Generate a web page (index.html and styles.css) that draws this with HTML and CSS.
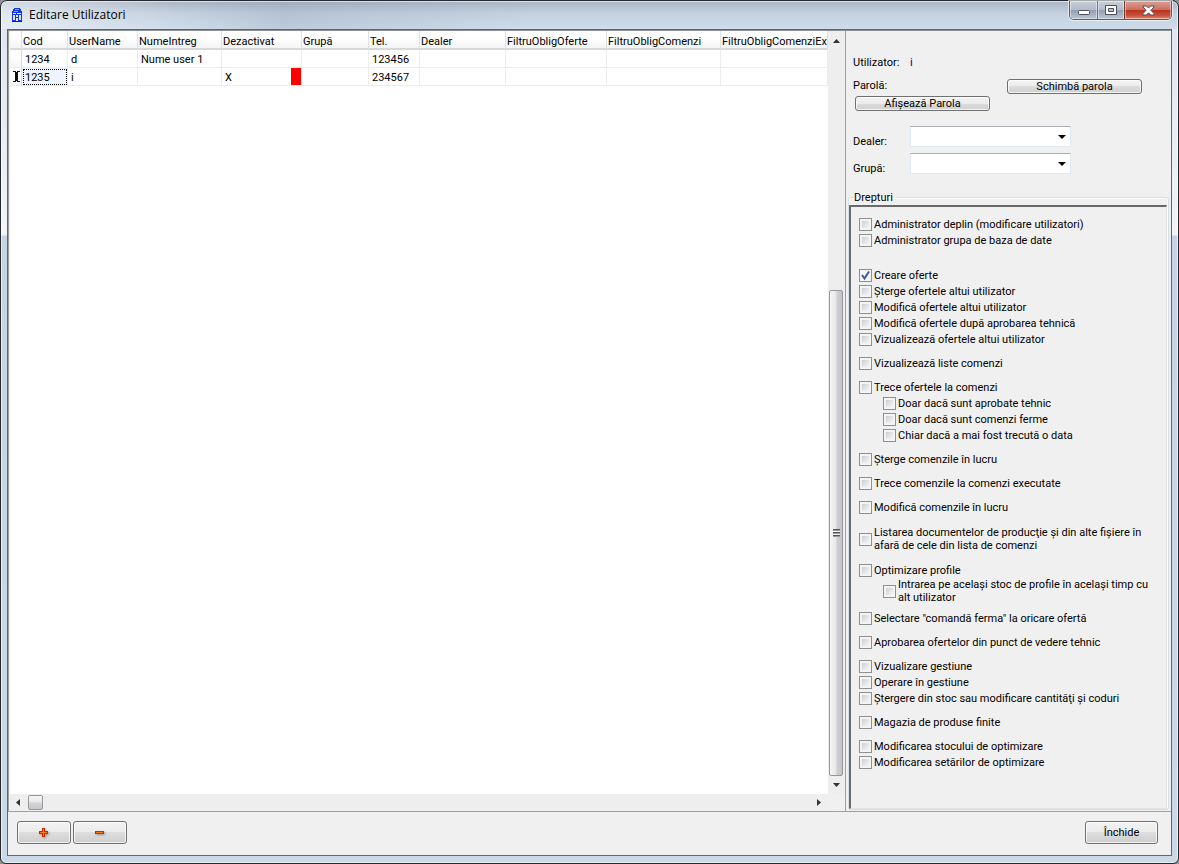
FILE: index.html
```html
<!DOCTYPE html>
<html lang="ro">
<head>
<meta charset="utf-8">
<title>Editare Utilizatori</title>
<link rel="stylesheet" href="styles.css">
</head>
<body>
<div class="window">
  <header class="titlebar">
    <svg class="app-icon" width="12" height="16" viewBox="0 0 12 16" aria-hidden="true">
      <path d="M3 1h6v1h1v2h1v11H1V4h1V2h1z" fill="#1436e8"/>
      <path d="M4 2h4v1H4zM3 4h4v1H3z" fill="#7fa2ff"/>
      <path d="M2 6h3v1H2zM6 6h4v1H6zM2 8h2v5H2zM5 8h2v2H5zM8 8h2v5H8zM5 11h2v3H5z" fill="#dfe8ff"/>
      <path d="M1 14h10v1H1z" fill="#0d1fa0"/>
    </svg>
    <h1 class="title">Editare Utilizatori</h1>
    <div class="caption-buttons">
      <button class="caption" type="button" aria-label="Minimizare">
        <svg width="13" height="11" viewBox="0 0 13 11"><rect x="1.500" y="5.500" width="11" height="4" rx="1" fill="#fff" stroke="#4a5060"/></svg>
      </button>
      <button class="caption caption-max" type="button" aria-label="Maximizare">
        <svg width="12" height="11" viewBox="0 0 12 11"><path d="M.5.5h11v9H.5z" fill="#fff" stroke="#4a5060"/><path d="M3.500 3.500h5v3h-5z" fill="#b9bfcc" stroke="#4a5060"/></svg>
      </button>
      <button class="caption caption-close" type="button" aria-label="Închidere fereastră">
        <svg width="13" height="11" viewBox="0 0 13 11"><path d="M1 1h3.500l2 2 2-2H12v1L9 5.200 12 8.500V10H8.500l-2-2.200-2 2.200H1V8.500l3-3.300L1 2z" fill="#fff" stroke="#5a4650"/></svg>
      </button>
    </div>
  </header>

  <main class="client">
    <div class="panes">
      <section class="grid-pane">
        <div class="sheet">
          <table class="users">
            <colgroup>
              <col class="c-mark"><col class="c-cod"><col class="c-user"><col class="c-nume"><col class="c-dez"><col class="c-grupa"><col class="c-tel"><col class="c-dealer"><col class="c-foferte"><col class="c-fcom"><col class="c-fcomex">
            </colgroup>
            <thead>
              <tr><th></th><th>Cod</th><th>UserName</th><th>NumeIntreg</th><th>Dezactivat</th><th>Grupă</th><th>Tel.</th><th>Dealer</th><th>FiltruObligOferte</th><th>FiltruObligComenzi</th><th>FiltruObligComenziEx</th></tr>
            </thead>
            <tbody>
              <tr><td class="mark"></td><td>1234</td><td>d</td><td>Nume user 1</td><td></td><td></td><td>123456</td><td></td><td></td><td></td><td></td></tr>
              <tr><td class="mark"><svg width="7" height="11" viewBox="0 0 7 11"><path d="M0 0h3v1h1V0h3v1H5v9h2v1H4v-1H3v1H0v-1h2V1H0z" fill="#111"/></svg></td><td class="focused">1235</td><td>i</td><td></td><td class="disabled-flag">X</td><td></td><td>234567</td><td></td><td></td><td></td><td></td></tr>
            </tbody>
          </table>
        </div>
        <div class="scroll scroll-v">
          <svg class="arrow" width="7" height="4" viewBox="0 0 7 4"><path d="M3.500 0 7 4H0z"/></svg>
          <div class="track-v"><div class="thumb-v"><i class="grip"></i></div></div>
          <svg class="arrow" width="7" height="4" viewBox="0 0 7 4"><path d="M0 0h7L3.500 4z"/></svg>
        </div>
        <div class="scroll scroll-h">
          <svg class="arrow" width="4" height="7" viewBox="0 0 4 7"><path d="M4 0v7L0 3.500z"/></svg>
          <div class="track-h"><div class="thumb-h"></div></div>
          <svg class="arrow" width="4" height="7" viewBox="0 0 4 7"><path d="M0 0v7l4-3.500z"/></svg>
        </div>
      </section>

      <aside class="side">
        <div class="account">
          <div class="line"><span class="name">Utilizator:</span><span class="navy">i</span></div>
          <div class="password">
            <div class="password-col"><span>Parolă:</span><button class="btn btn-slim" type="button">Afişează Parola</button></div>
            <button class="btn btn-slim" type="button">Schimbă parola</button>
          </div>
          <div class="pick"><label class="name" for="dealer">Dealer:</label><span class="combo"><select id="dealer"><option></option></select></span></div>
          <div class="pick"><label class="name" for="grupa">Grupă:</label><span class="combo"><select id="grupa"><option></option></select></span></div>
        </div>

        <fieldset class="rights">
          <legend>Drepturi</legend>
          <div class="rights-list">
            <div class="group group-admin">
              <label class="right"><input type="checkbox">Administrator deplin (modificare utilizatori)</label>
              <label class="right"><input type="checkbox">Administrator grupa de baza de date</label>
            </div>
            <div class="group">
              <label class="right"><input type="checkbox" checked>Creare oferte</label>
              <label class="right"><input type="checkbox">Şterge ofertele altui utilizator</label>
              <label class="right"><input type="checkbox">Modifică ofertele altui utilizator</label>
              <label class="right"><input type="checkbox">Modifică ofertele după aprobarea tehnică</label>
              <label class="right"><input type="checkbox">Vizualizează ofertele altui utilizator</label>
            </div>
            <div class="group"><label class="right"><input type="checkbox">Vizualizează liste comenzi</label></div>
            <div class="group">
              <label class="right"><input type="checkbox">Trece ofertele la comenzi</label>
              <label class="right sub"><input type="checkbox">Doar dacă sunt aprobate tehnic</label>
              <label class="right sub"><input type="checkbox">Doar dacă sunt comenzi ferme</label>
              <label class="right sub"><input type="checkbox">Chiar dacă a mai fost trecută o data</label>
            </div>
            <div class="group"><label class="right"><input type="checkbox">Şterge comenzile în lucru</label></div>
            <div class="group"><label class="right"><input type="checkbox">Trece comenzile la comenzi executate</label></div>
            <div class="group"><label class="right"><input type="checkbox">Modifică comenzile în lucru</label></div>
            <div class="group group-tall"><label class="right"><input type="checkbox"><span>Listarea documentelor de producţie şi din alte fişiere în<br>afară de cele din lista de comenzi</span></label></div>
            <div class="group group-tight">
              <label class="right"><input type="checkbox">Optimizare profile</label>
              <label class="right sub"><input type="checkbox"><span>Intrarea pe acelaşi stoc de profile în acelaşi timp cu<br>alt utilizator</span></label>
            </div>
            <div class="group"><label class="right"><input type="checkbox">Selectare "comandă ferma" la oricare ofertă</label></div>
            <div class="group"><label class="right"><input type="checkbox">Aprobarea ofertelor din punct de vedere tehnic</label></div>
            <div class="group">
              <label class="right"><input type="checkbox">Vizualizare gestiune</label>
              <label class="right"><input type="checkbox">Operare în gestiune</label>
              <label class="right"><input type="checkbox">Ştergere din stoc sau modificare cantităţi şi coduri</label>
            </div>
            <div class="group"><label class="right"><input type="checkbox">Magazia de produse finite</label></div>
            <div class="group">
              <label class="right"><input type="checkbox">Modificarea stocului de optimizare</label>
              <label class="right"><input type="checkbox">Modificarea setărilor de optimizare</label>
            </div>
          </div>
        </fieldset>
      </aside>
    </div>

    <footer class="actions">
      <button class="btn btn-icon" type="button" aria-label="Adaugă">
        <svg width="11" height="11" viewBox="0 0 11 11"><path d="M3 1h3v3h3v3H6v3H3V7H0V4h3z" fill="#cc2a04"/><path d="M4 2h1v3h3v1H5v3H4V6H1V5h3z" fill="#f47a1c"/></svg>
      </button>
      <button class="btn btn-icon" type="button" aria-label="Şterge">
        <svg width="11" height="11" viewBox="0 0 11 11"><path d="M0 4h9v3H0z" fill="#cc2a04"/><path d="M1 5h7v1H1z" fill="#f47a1c"/></svg>
      </button>
      <button class="btn btn-close" type="button">Închide</button>
    </footer>
  </main>
</div>
</body>
</html>
```
FILE: styles.css
```css
* { box-sizing: border-box; }

body {
  margin: 0;
  background: #8d9096;
  color: #000;
  font: 11px/13px Roboto, Tahoma, sans-serif;
}

button, select, input { font: inherit; color: inherit; margin: 0; }

/* Window frame */
.window {
  display: flex;
  flex-direction: column;
  min-height: 100vh;
  padding: 0 6px 7px;
  border: 1px solid #26282e;
  border-radius: 7px 7px 6px 6px;
  background:
    linear-gradient(90deg, rgba(255,255,255,.5), rgba(255,255,255,0) 15%, rgba(120,135,160,.2) 24%, rgba(255,255,255,0) 45%) 0 0 / 100% 28px no-repeat,
    linear-gradient(#a9b4c4, #c3d0df 12px, #cfdce9 28px) 0 0 / 100% 28px no-repeat,
    linear-gradient(#dce4ee, #f2f4f8 234px, #c5d3e4 235px, #cbd9e7);
  box-shadow: inset 0 0 0 1px rgba(255,255,255,.6);
}

.titlebar {
  display: flex;
  align-items: flex-start;
  height: 28px;
  padding-left: 4px;
}
.app-icon { margin-top: 6px; }
.title {
  flex: 1;
  margin: 6px 0 0 6px;
  font: 12px/16px "Open Sans", "Segoe UI", sans-serif;
}

.caption-buttons {
  display: flex;
  height: 19px;
  border: 1px solid #545b69;
  border-top: 0;
  border-radius: 0 0 5px 5px;
  overflow: hidden;
  box-shadow: 0 0 0 1px rgba(255,255,255,.6);
}
.caption {
  display: flex;
  align-items: center;
  justify-content: center;
  width: 27px;
  padding: 0;
  border: 0;
  background: linear-gradient(#c9cfda, #b4bbc9 50%, #929db0 50%, #bac5d4);
  box-shadow: inset 0 0 0 1px rgba(255,255,255,.45);
}
.caption-max { border-left: 1px solid #6d7482; }
.caption-close {
  width: 47px;
  border-left: 1px solid #6d3a34;
  background: linear-gradient(#dba297, #cc6f5f 48%, #b8301b 50%, #c7523d 80%, #dd8a70);
}

.client {
  display: flex;
  flex: 1;
  flex-direction: column;
  border: 1px solid #5d6673;
  background: #f0f0f0;
}

.panes {
  display: grid;
  flex: 1;
  grid-template-columns: minmax(0, 1fr) 325px;
  border-top: 1px solid #8a8f96;
  border-bottom: 1px solid #a0a0a0;
}

/* User table */
.grid-pane {
  display: grid;
  grid-template: minmax(0, 1fr) 16px / minmax(0, 1fr) 16px;
  padding: 0 1px 1px;
  border-right: 1px solid #a0a0a0;
  border-left: 1px solid #a0a0a0;
}
.sheet { overflow: hidden; background: #fff; }
.users {
  width: 818px;
  border-collapse: separate;
  border-spacing: 0;
  table-layout: fixed;
}
.c-mark { width: 12px; }
.c-cod { width: 46px; }
.c-user { width: 70px; }
.c-nume { width: 84px; }
.c-dez { width: 80px; }
.c-grupa { width: 67px; }
.c-tel { width: 51px; }
.c-dealer { width: 86px; }
.c-foferte { width: 101px; }
.c-fcom { width: 114px; }
.c-fcomex { width: 107px; }
.users th, .users td {
  height: 18px;
  padding: 1px 0 0 3px;
  border-right: 1px solid #ececec;
  border-bottom: 1px solid #ececec;
  text-align: left;
  white-space: nowrap;
}
.users th {
  height: 19px;
  padding: 3px 0 0 1px;
  border-right-color: #e0e0e0;
  border-bottom: 2px solid #d8d8d8;
  background: linear-gradient(#fff 40%, #f3f4f5);
  font-weight: normal;
}
.users .mark {
  padding: 0 0 0 3px;
  border-right-color: #d9d9d9;
  background: linear-gradient(#fff 40%, #f3f4f5);
}
.mark svg { display: block; }
.users .focused { outline: 1px dotted #000; outline-offset: -2px; background: #eef4fd; }
.users .disabled-flag { background: linear-gradient(#f00, #f00) right / 10px 100% no-repeat; }

/* Scroll bars */
.scroll { display: flex; align-items: center; background: #eee; }
.scroll-v { flex-direction: column; padding: 8px 0 7px; }
.scroll-h { padding: 0 7px 0 6px; }
.arrow { display: block; flex: none; fill: #333; }
.track-v {
  display: flex;
  flex: 1;
  flex-direction: column;
  justify-content: flex-end;
  width: 100%;
  padding: 7px 1px;
}
.thumb-v {
  display: flex;
  align-items: center;
  justify-content: center;
  height: 67%;
  border: 1px solid #979797;
  border-radius: 2px;
  background: linear-gradient(90deg, #f6f6f6, #e8e8ea 45%, #cfd0d3 60%, #c2c4c9);
}
.grip {
  width: 7px;
  height: 8px;
  background: repeating-linear-gradient(#555 0 1px, #999 1px 2px, #f4f4f4 2px 3px);
}
.track-h { flex: 1; padding: 0 8px; }
.thumb-h {
  width: 15px;
  height: 15px;
  border: 1px solid #979797;
  border-radius: 2px;
  background: linear-gradient(#f6f6f6, #e8e8ea 45%, #d3d4d7 55%, #c6c8cc);
}

/* Side panel */
.side { display: flex; flex-direction: column; padding: 0 2px 1px; }
.account { padding: 25px 0 0 5px; }
.line, .pick { display: flex; }
.name { width: 57px; }
.navy { color: #000080; }
.password { display: flex; gap: 17px; margin-top: 10px; }
.password-col { display: flex; flex-direction: column; gap: 4px; padding-left: 2px; }
.password-col span { margin-left: -2px; }
.pick { align-items: center; height: 21px; margin-top: 6px; }
.password + .pick { margin-top: 15px; }
.pick .name { padding-top: 9px; }
.combo { position: relative; width: 161px; height: 21px; }
.combo select {
  width: 100%;
  height: 100%;
  border: 1px solid #e2e8f0;
  border-top-color: #abadb3;
  background: #fff;
  appearance: none;
}
.combo::after {
  position: absolute;
  top: 9px;
  right: 5px;
  border: 4px solid transparent;
  border-top-color: #000;
  border-bottom: 0;
  content: "";
  pointer-events: none;
}

.btn {
  padding: 0;
  border: 1px solid #707070;
  border-radius: 3px;
  background: linear-gradient(#f3f3f3, #ebebeb 50%, #dddddd 50%, #cfcfcf);
  box-shadow: inset 0 0 0 1px rgba(255,255,255,.75);
}
.btn-slim { width: 135px; height: 15px; line-height: 13px; }

.rights {
  display: flex;
  flex: 1;
  flex-direction: column;
  min-width: 0;
  margin: 17px 0 0;
  padding: 1px 1px 0 0;
  border: 1px solid #d5dfe5;
  border-radius: 3px;
  box-shadow: inset 0 0 0 1px #fff;
}
.rights legend { margin-left: 5px; padding: 0 2px 0 0; }
.rights-list {
  flex: 1;
  height: 100%;
  padding: 9px 8px;
  border: 2px solid #696969;
  border-right: 1px solid #e3e3e3;
  border-bottom: 1px solid #e3e3e3;
}
.group { margin-bottom: 8px; }
.group-admin { margin-bottom: 19px; }
.group-tall { margin: 11px 0 10px; }
.group-tight { margin-bottom: 6px; }
.right {
  display: flex;
  align-items: center;
  gap: 2px;
  min-height: 16px;
  white-space: nowrap;
}
.sub { margin-left: 24px; }
.right input {
  flex: none;
  width: 13px;
  height: 13px;
  border: 1px solid #8e8f8f;
  background: linear-gradient(135deg, #cbcfd5, #f6f6f6) content-box, #f4f4f4;
  padding: 2px;
  appearance: none;
}
.right input:checked {
  background: #f4f4f4 url("data:image/svg+xml,%3Csvg xmlns='http://www.w3.org/2000/svg' viewBox='0 0 11 11'%3E%3Cpath d='M2 5l2.500 3.500L9 1.500' fill='none' stroke='%23405a9c' stroke-width='2'/%3E%3C/svg%3E");
}

/* Bottom bar */
.actions {
  display: flex;
  gap: 2px;
  height: 43px;
  padding: 9px 13px 0 9px;
}
.btn-icon {
  display: flex;
  align-items: center;
  justify-content: center;
  width: 54px;
  height: 23px;
}
.btn-icon svg { filter: drop-shadow(1px 1px 1px rgba(0,0,0,.3)); }
.btn-close { width: 73px; height: 23px; margin-left: auto; }
```
